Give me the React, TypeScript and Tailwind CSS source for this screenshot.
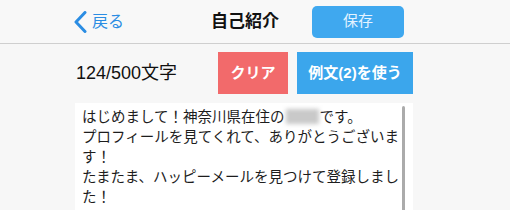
const JP = "font-['Liberation_Sans','Noto_Sans_CJK_JP',sans-serif]";

function BackChevron() {
  return (
    <svg width="13" height="22" viewBox="0 0 13 22" fill="none" className="shrink-0">
      <path d="M11 1.5 L2 11 L11 20.5" stroke="#2b8de3" strokeWidth="3" strokeLinecap="round" strokeLinejoin="round" />
    </svg>
  );
}

function Header() {
  return (
    <div className="flex h-[44px] items-center border-b border-[#cfcfcf] bg-[#f8f8f8] pl-[74px]">
      <button className="flex items-center text-[#2b8de3]">
        <BackChevron />
        <span className="ml-[5px] text-[16px]">戻る</span>
      </button>
      <div className="ml-[87px] text-[17px] font-bold text-[#111]">自己紹介</div>
      <button className="ml-[33px] h-[32px] w-[92px] rounded-[5px] bg-[#3fa8ef] text-[15px] text-[#e4f3ff]">
        保存
      </button>
    </div>
  );
}

function Toolbar() {
  return (
    <div className="mt-[8px] flex h-[42px] items-center pl-[76px]">
      <span className="w-[142px] text-[18px] text-[#111]">124/500文字</span>
      <button className="h-full w-[70px] bg-[#f26a6b] text-[15px] font-bold text-white">クリア</button>
      <button className="ml-[9px] h-full w-[116px] bg-[#3ba6ec] text-[15px] font-bold text-white">
        例文(2)を使う
      </button>
    </div>
  );
}

function Editor() {
  return (
    <div className="ml-[75px] mt-[9px] flex h-[120px] w-[338px] bg-white">
      <p className="w-[326px] pl-[7px] pt-[3px] text-[14.5px] leading-[20px] text-[#1d1d1d] font-['Noto_Sans_CJK_JP',sans-serif]">
        はじめまして！神奈川県在住の
        <span className="mx-[1px] inline-block h-[15px] w-[33px] translate-y-[2px] bg-[#c9c9c9] blur-[2px]" />
        です。
        <br />
        プロフィールを見てくれて、ありがとうございます！
        <br />
        たまたま、ハッピーメールを見つけて登録しました！
      </p>
      <div className="ml-[1px] mt-[3px] w-[3px] rounded-full bg-[#ababab]" />
    </div>
  );
}

export default function App() {
  return (
    <div className={`h-[210px] w-[510px] overflow-hidden bg-[#f7f7f7] ${JP}`}>
      <Header />
      <Toolbar />
      <Editor />
    </div>
  );
}
